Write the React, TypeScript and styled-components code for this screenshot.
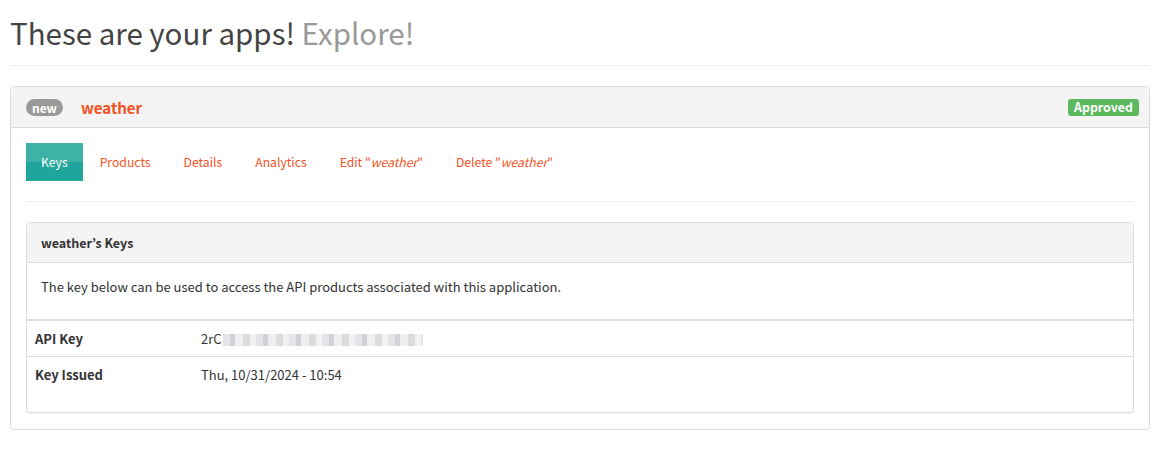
import React from 'react'
import styled, { createGlobalStyle } from 'styled-components'

const GlobalStyle = createGlobalStyle`
  body {
    margin: 0;
    background: #fff;
    font-family: 'Noto Sans CJK KR', 'Noto Sans', sans-serif;
    color: #333;
  }
`;

const Page = styled.div`
  padding: 0 16px 0 10px;
`;

const Heading = styled.h1`
  margin: 0;
  padding-top: 11px;
  font-size: 29.5px;
  font-weight: 400;
  line-height: 42px;
  color: #444;
  span {
    color: #999;
  }
`;

const Rule = styled.hr<{ $top: number; $bottom: number }>`
  border: 0;
  border-top: 1px solid #eee;
  margin: ${(p) => `${p.$top}px 0 ${p.$bottom}px`};
`;

const Panel = styled.div`
  border: 1px solid #ddd;
  border-radius: 4px;
  background: #fff;
  box-shadow: 0 1px 1px rgba(0, 0, 0, 0.05);
  overflow: hidden;
`;

const PanelHeader = styled.div<{ $height: number }>`
  display: flex;
  align-items: center;
  height: ${(p) => p.$height}px;
  background: #f4f4f4;
  border-bottom: 1px solid #ddd;
  padding: 0 10px 0 15px;
`;

const Badge = styled.span<{ $color: string }>`
  display: inline-block;
  background: ${(p) => p.$color};
  color: #fff;
  font-size: 12px;
  font-weight: 700;
  line-height: 17px;
  padding: 0 6px;
  border-radius: 9px;
`;

const StatusBadge = styled(Badge)`
  margin-left: auto;
  border-radius: 3px;
  font-size: 12.4px;
`;

const AppName = styled.span`
  margin-left: 18px;
  color: #f4511e;
  font-size: 15px;
  font-weight: 700;
`;

const PanelBody = styled.div`
  padding: 15px 15px 16px;
`;

const Tabs = styled.ul`
  display: flex;
  list-style: none;
  margin: 0;
  padding: 0;
`;

const Tab = styled.li<{ $active?: boolean }>`
  height: 38px;
  display: flex;
  align-items: center;
  padding: 0 ${(p) => (p.$active ? '15px 0 15px' : '16px 0 17px')};
  font-size: 12.2px;
  color: ${(p) => (p.$active ? '#fff' : '#f4511e')};
  background: ${(p) =>
    p.$active ? 'linear-gradient(#3fb2a8 0, #3fb2a8 50%, #1fa59b 50%, #1fa59b 100%)' : 'transparent'};
  em {
    font-style: italic;
  }
`;

const InnerHeader = styled(PanelHeader)`
  font-size: 12.5px;
  font-weight: 700;
  color: #333;
  padding-left: 14px;
`;

const Intro = styled.p`
  margin: 0;
  padding: 14px 14px 23px;
  font-size: 13px;
  line-height: 19px;
`;

const Table = styled.table`
  width: 100%;
  border-collapse: collapse;
  border-top: 2px solid #ddd;
  margin-bottom: 20px;
  font-size: 13px;
  td {
    padding: 0 8px;
    height: 35px;
    vertical-align: middle;
  }
  tr + tr td {
    border-top: 1px solid #ddd;
  }
  td:first-child {
    width: 150px;
    font-weight: 700;
    color: #333;
  }
`;

const Blur = styled.span`
  display: inline-block;
  vertical-align: middle;
  width: 200px;
  height: 12px;
  margin-left: 1px;
  background:
    repeating-linear-gradient(90deg, #e0e0e4 0 7px, #c9c9cf 7px 12px, #ececef 12px 20px, #d6d4d8 20px 27px, #f0f0f2 27px 33px);
  opacity: 0.85;
`;

const apps = [{ name: 'weather', issued: 'Thu, 10/31/2024 - 10:54' }];

const App = (): JSX.Element => (
  <>
    <GlobalStyle />
    <Page>
      <Heading>
        These are your apps! <span>Explore!</span>
      </Heading>
      <Rule $top={12} $bottom={20} />
      {apps.map((app) => (
        <Panel key={app.name}>
          <PanelHeader $height={40}>
            <Badge $color="#999">new</Badge>
            <AppName>{app.name}</AppName>
            <StatusBadge $color="#5cb85c">Approved</StatusBadge>
          </PanelHeader>
          <PanelBody>
            <Tabs>
              <Tab $active>Keys</Tab>
              <Tab>Products</Tab>
              <Tab>Details</Tab>
              <Tab>Analytics</Tab>
              <Tab>
                Edit "<em>{app.name}</em>"
              </Tab>
              <Tab>
                Delete "<em>{app.name}</em>"
              </Tab>
            </Tabs>
            <Rule $top={20} $bottom={20} />
            <Panel>
              <InnerHeader $height={39}>{app.name}’s Keys</InnerHeader>
              <Intro>The key below can be used to access the API products associated with this application.</Intro>
              <Table>
                <tbody>
                  <tr>
                    <td>API Key</td>
                    <td>
                      2rC<Blur />
                    </td>
                  </tr>
                  <tr>
                    <td>Key Issued</td>
                    <td>{app.issued}</td>
                  </tr>
                </tbody>
              </Table>
            </Panel>
          </PanelBody>
        </Panel>
      ))}
    </Page>
  </>
);

export default App;
